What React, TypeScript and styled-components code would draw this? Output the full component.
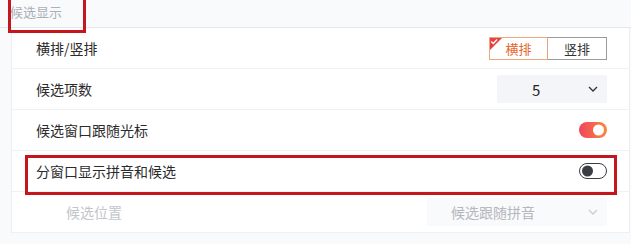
import React from "react";
import styled, { createGlobalStyle } from "styled-components";

const GlobalStyle = createGlobalStyle`
  html, body { margin: 0; padding: 0; background: #f9fafc; }
  body { font-family: "Noto Sans CJK SC", "Noto Sans", sans-serif; }
  * { box-sizing: border-box; }
`;

const Page = styled.div`
  position: relative;
  width: 631px;
  height: 244px;
  overflow: hidden;
  background: #f9fafc;
`;

const Header = styled.div`
  height: 28px;
  padding-left: 10px;
  font-size: 13px;
  line-height: 24px;
  color: #aab0b8;
  border-bottom: 1px solid #e4e6ea;
`;

const Panel = styled.div`
  margin: 0 1px 0 11px;
  background: #ffffff;
  border-left: 1px solid #eceef1;
  border-right: 1px solid #eceef1;
`;

const Row = styled.div`
  height: 41px;
  display: flex;
  align-items: center;
  justify-content: space-between;
  padding: 0 22px 0 24px;
  border-bottom: 1px solid #eff1f4;
`;

const Label = styled.span<{ $disabled?: boolean; $indent?: boolean }>`
  font-size: 14px;
  color: ${(p) => (p.$disabled ? "#c2c5ca" : "#2b2b2b")};
  padding-left: ${(p) => (p.$indent ? "30px" : "0")};
`;

const Segmented = styled.div`
  display: flex;
  height: 23px;
`;

const SegButton = styled.div<{ $active?: boolean }>`
  position: relative;
  width: ${(p) => (p.$active ? "59px" : "59px")};
  height: 23px;
  display: flex;
  align-items: center;
  justify-content: center;
  font-size: 13px;
  color: ${(p) => (p.$active ? "#e5652c" : "#333")};
  border: 1px solid ${(p) => (p.$active ? "#eea77c" : "#9a9a9a")};
  ${(p) => (p.$active ? "border-right-color: #e9a27a;" : "border-left: none;")}
  background: #fff;
  overflow: hidden;
`;

const Corner = styled.svg`
  position: absolute;
  left: -1px;
  top: -1px;
`;

const Select = styled.div<{ $width: number; $pad: number; $disabled?: boolean }>`
  width: ${(p) => p.$width}px;
  height: 28px;
  display: flex;
  align-items: center;
  padding-left: ${(p) => p.$pad}px;
  padding-right: 9px;
  background: ${(p) => (p.$disabled ? "#f9fafb" : "#f3f5f8")};
  border-radius: 2px;
  font-size: ${(p) => (p.$disabled ? "14px" : "15px")};
  color: ${(p) => (p.$disabled ? "#b4b7bc" : "#222")};
`;

const SelectText = styled.span`
  flex: 1;
`;

const Toggle = styled.div<{ $on?: boolean }>`
  position: relative;
  width: 28px;
  height: 16px;
  border-radius: 8px;
  background: ${(p) => (p.$on ? "linear-gradient(90deg, #f0435f, #f98a3a)" : "#fff")};
  border: ${(p) => (p.$on ? "none" : "1.5px solid #3a3d44")};
`;

const Knob = styled.span<{ $on?: boolean }>`
  position: absolute;
  top: 50%;
  transform: translateY(-50%);
  width: 11px;
  height: 11px;
  border-radius: 50%;
  background: ${(p) => (p.$on ? "#fff" : "#3a3d44")};
  ${(p) => (p.$on ? "right: 3px;" : "left: 2px;")}
`;

const Annotation = styled.div<{ $l: number; $t: number; $w: number; $h: number }>`
  position: absolute;
  left: ${(p) => p.$l}px;
  top: ${(p) => p.$t}px;
  width: ${(p) => p.$w}px;
  height: ${(p) => p.$h}px;
  border: 3px solid #c4161c;
  pointer-events: none;
`;

const Chevron = ({ color }: { color: string }) => (
  <svg width="10" height="6" viewBox="0 0 10 6">
    <path d="M1 1 L5 5 L9 1" fill="none" stroke={color} strokeWidth="1.3" />
  </svg>
);

export default function App() {
  return (
    <Page>
      <GlobalStyle />
      <Header>候选显示</Header>
      <Panel>
        <Row>
          <Label>横排/竖排</Label>
          <Segmented>
            <SegButton $active>
              <Corner width="14" height="14" viewBox="0 0 14 14">
                <path d="M0 0 H14 L0 14 Z" fill="#e8403f" />
                <path d="M2.2 4.6 L4.3 6.6 L8 2.6" fill="none" stroke="#fff" strokeWidth="1.4" />
              </Corner>
              横排
            </SegButton>
            <SegButton>竖排</SegButton>
          </Segmented>
        </Row>
        <Row>
          <Label>候选项数</Label>
          <Select $width={110} $pad={35}>
            <SelectText>5</SelectText>
            <Chevron color="#333" />
          </Select>
        </Row>
        <Row>
          <Label>候选窗口跟随光标</Label>
          <Toggle $on>
            <Knob $on />
          </Toggle>
        </Row>
        <Row>
          <Label>分窗口显示拼音和候选</Label>
          <Toggle>
            <Knob />
          </Toggle>
        </Row>
        <Row>
          <Label $disabled $indent>候选位置</Label>
          <Select $width={180} $pad={24} $disabled>
            <SelectText>候选跟随拼音</SelectText>
            <Chevron color="#c9ccd1" />
          </Select>
        </Row>
      </Panel>
      <Annotation $l={8} $t={-4} $w={78} $h={37} />
      <Annotation $l={25} $t={155} $w={592} $h={40} />
    </Page>
  );
}
